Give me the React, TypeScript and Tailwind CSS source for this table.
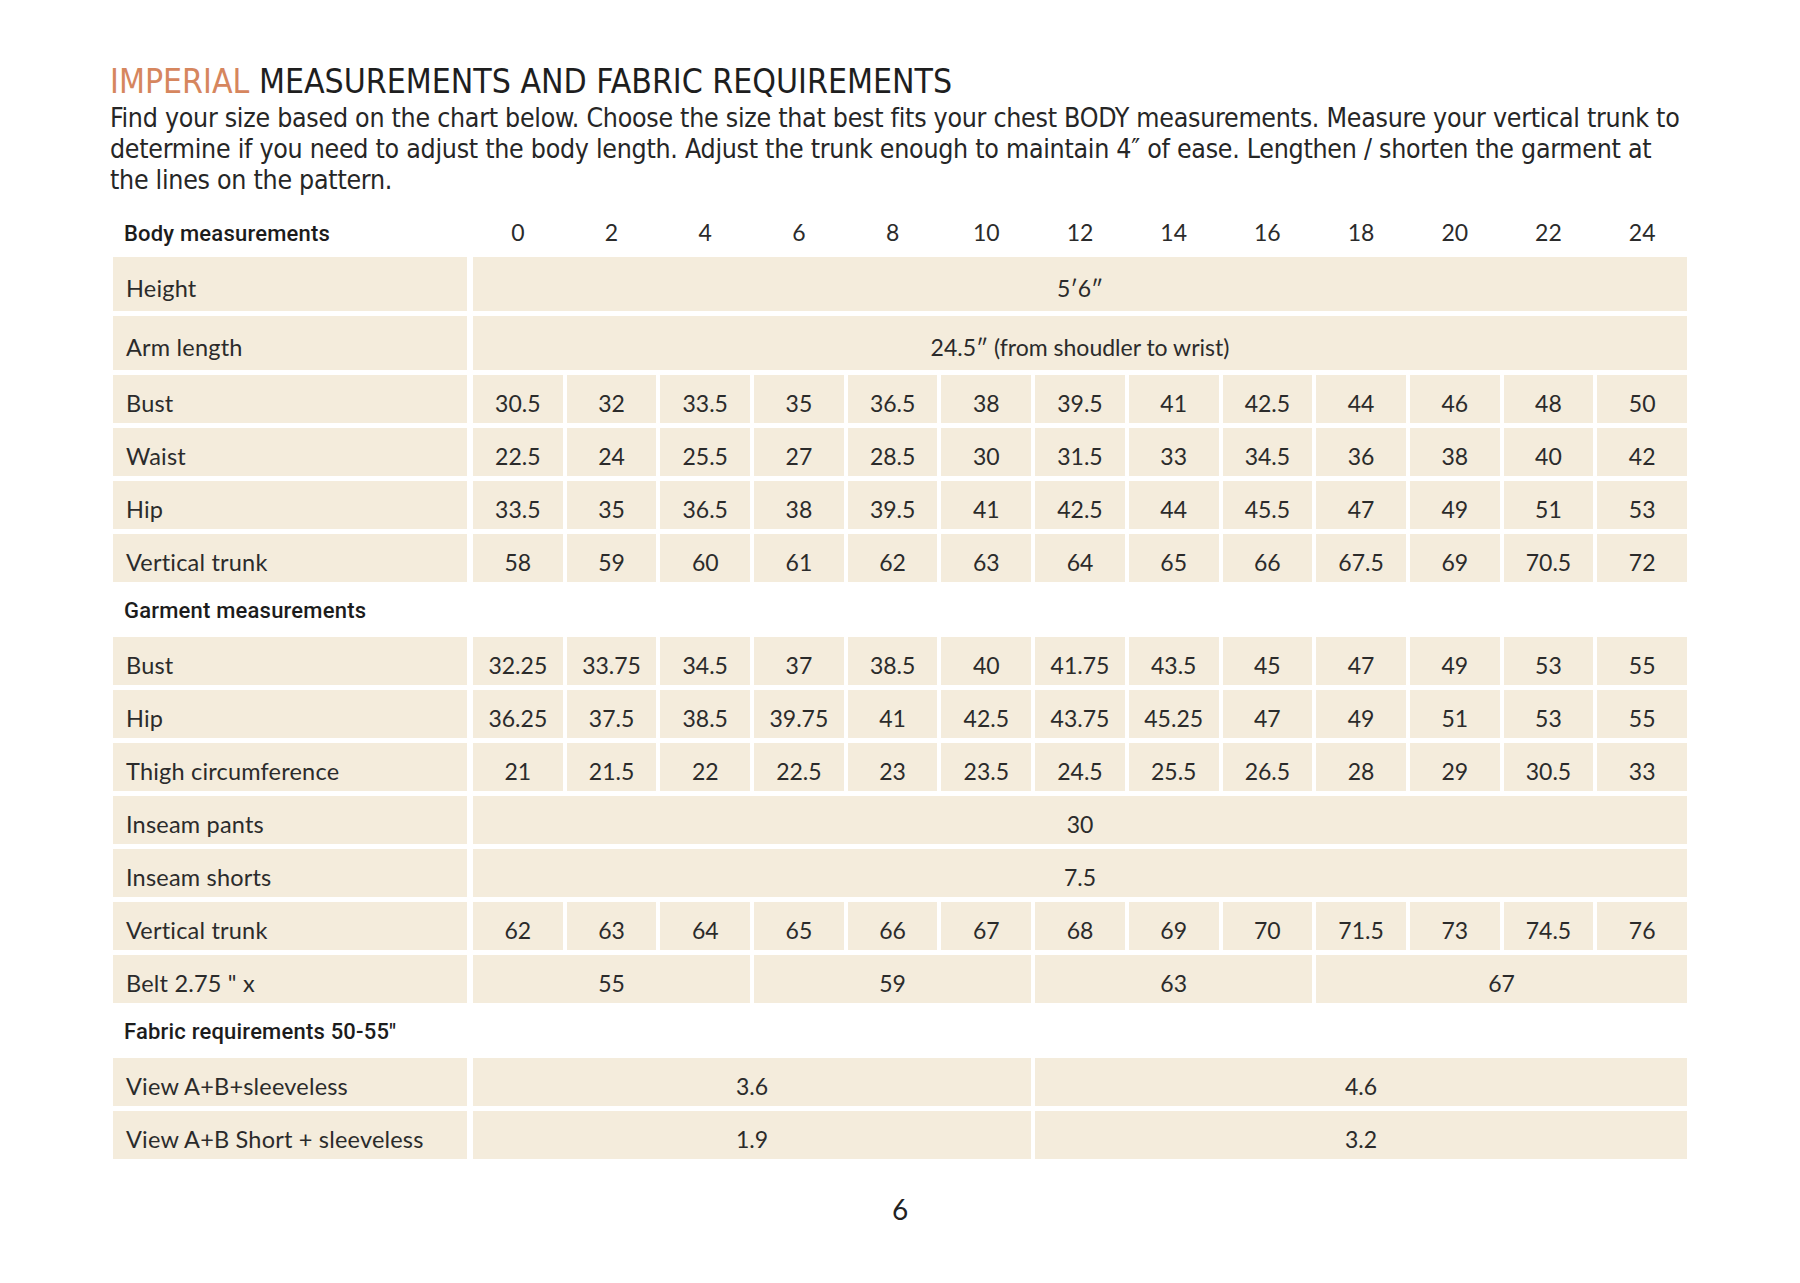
import React from 'react';

// Imperial size chart page
const SIZES = ['0', '2', '4', '6', '8', '10', '12', '14', '16', '18', '20', '22', '24'];

type Cell = { v: string; span?: number };
type Row = { label: string; cells: Cell[]; tall?: boolean };

const each = (vals: string[]): Cell[] => vals.map((v) => ({ v }));

const BODY: Row[] = [
  { label: 'Height', cells: [{ v: '5′6″', span: 13 }], tall: true },
  { label: 'Arm length', cells: [{ v: '24.5″ (from shoudler to wrist)', span: 13 }], tall: true },
  { label: 'Bust', cells: each(['30.5', '32', '33.5', '35', '36.5', '38', '39.5', '41', '42.5', '44', '46', '48', '50']) },
  { label: 'Waist', cells: each(['22.5', '24', '25.5', '27', '28.5', '30', '31.5', '33', '34.5', '36', '38', '40', '42']) },
  { label: 'Hip', cells: each(['33.5', '35', '36.5', '38', '39.5', '41', '42.5', '44', '45.5', '47', '49', '51', '53']) },
  { label: 'Vertical trunk', cells: each(['58', '59', '60', '61', '62', '63', '64', '65', '66', '67.5', '69', '70.5', '72']) },
];

const GARMENT: Row[] = [
  { label: 'Bust', cells: each(['32.25', '33.75', '34.5', '37', '38.5', '40', '41.75', '43.5', '45', '47', '49', '53', '55']) },
  { label: 'Hip', cells: each(['36.25', '37.5', '38.5', '39.75', '41', '42.5', '43.75', '45.25', '47', '49', '51', '53', '55']) },
  { label: 'Thigh circumference', cells: each(['21', '21.5', '22', '22.5', '23', '23.5', '24.5', '25.5', '26.5', '28', '29', '30.5', '33']) },
  { label: 'Inseam pants', cells: [{ v: '30', span: 13 }] },
  { label: 'Inseam shorts', cells: [{ v: '7.5', span: 13 }] },
  { label: 'Vertical trunk', cells: each(['62', '63', '64', '65', '66', '67', '68', '69', '70', '71.5', '73', '74.5', '76']) },
  {
    label: 'Belt 2.75 " x',
    cells: [
      { v: '55', span: 3 },
      { v: '59', span: 3 },
      { v: '63', span: 3 },
      { v: '67', span: 4 },
    ],
  },
];

const FABRIC: Row[] = [
  { label: 'View A+B+sleeveless', cells: [{ v: '3.6', span: 6 }, { v: '4.6', span: 7 }] },
  { label: 'View A+B Short + sleeveless', cells: [{ v: '1.9', span: 6 }, { v: '3.2', span: 7 }] },
];

const SPAN: Record<number, string> = {
  1: 'col-span-1',
  3: 'col-span-3',
  4: 'col-span-4',
  6: 'col-span-6',
  7: 'col-span-7',
  13: 'col-span-13',
};

const grid = 'grid grid-cols-[356px_repeat(13,minmax(0,1fr))] gap-x-[4px]';
const cellFont = "font-['Lato','Noto_Sans',sans-serif] text-[23px] text-[#2b2b2b]";

function TableRow({ row }: { row: Row }) {
  return (
    <div className={`${grid} ${row.tall ? 'h-[54px]' : 'h-[48px]'} ${cellFont}`}>
      <div className="mr-[2px] flex items-center bg-[#f4ecdc] pl-[13px] pt-[9px] text-[23.5px] tracking-[0.2px]">
        {row.label}
      </div>
      {row.cells.map((c, i) => (
        <div key={i} className={`${SPAN[c.span ?? 1]} flex items-center justify-center bg-[#f4ecdc] pt-[9px]`}>
          {c.v}
        </div>
      ))}
    </div>
  );
}

function Section({ title, rows, header }: { title: string; rows: Row[]; header?: boolean }) {
  return (
    <>
      <div className={`${grid} ${header ? 'h-[50px]' : 'h-[55px]'} items-center`}>
        <div className="pl-[11px] pt-[2px] font-['Roboto','Liberation_Sans',sans-serif] text-[22px] font-medium tracking-[0.2px] text-[#1c1c1c]">
          {title}
        </div>
        {header &&
          SIZES.map((s) => (
            <div key={s} className={`${cellFont} text-center`}>
              {s}
            </div>
          ))}
      </div>
      <div className="flex flex-col gap-y-[5px]">
        {rows.map((r, i) => (
          <TableRow key={i} row={r} />
        ))}
      </div>
    </>
  );
}

export default function App() {
  return (
    <div className="h-[1283px] w-[1800px] bg-white pt-[64px]">
      <div className="pl-[110px]">
        <h1 className="whitespace-nowrap font-['Liberation_Sans_Narrow','DejaVu_Sans_Condensed','Roboto_Condensed',sans-serif] text-[33.5px] leading-[36px] text-[#1e1e1e]">
          <span className="text-[#d6865e]">IMPERIAL</span> MEASUREMENTS AND FABRIC REQUIREMENTS
        </h1>
        <div className="mt-[2px] font-['Liberation_Sans_Narrow','DejaVu_Sans_Condensed','Roboto_Condensed',sans-serif] text-[26.5px] leading-[31px] tracking-[-0.27px] text-[#262626]">
          <div className="whitespace-nowrap">
            Find your size based on the chart below. Choose the size that best fits your chest BODY measurements. Measure your vertical trunk to
          </div>
          <div className="whitespace-nowrap">
            determine if you need to adjust the body length. Adjust the trunk enough to maintain 4″ of ease. Lengthen / shorten the garment at
          </div>
          <div className="whitespace-nowrap">the lines on the pattern.</div>
        </div>
      </div>

      <div className="ml-[113px] mt-[12px] w-[1574px]">
        <Section title="Body measurements" rows={BODY} header />
        <Section title="Garment measurements" rows={GARMENT} />
        <Section title={'Fabric requirements 50-55"'} rows={FABRIC} />
      </div>

      <div className="mt-[36px] text-center font-['Lato',sans-serif] text-[28px] leading-[28px] text-[#222]">6</div>
    </div>
  );
}
